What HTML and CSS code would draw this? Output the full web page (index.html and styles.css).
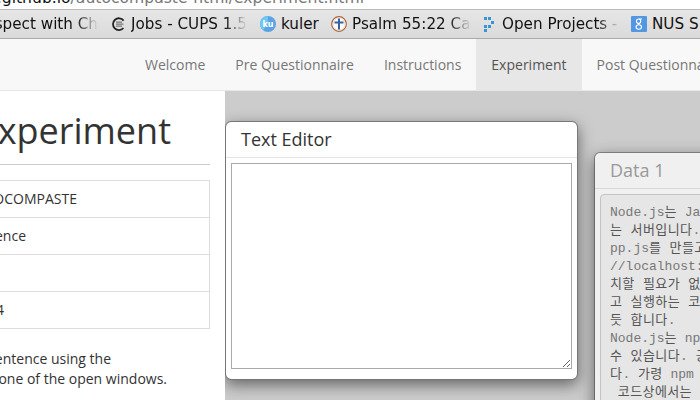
FILE: index.html
```
<!DOCTYPE html>
<html lang="en">
<head>
<meta charset="utf-8">
<title>Experiment</title>
<link rel="stylesheet" href="styles.css">
</head>
<body>
<header class="browser">
  <div class="address"><p class="url"><b>.github.io</b>/autocompaste-html/experiment.html</p></div>
  <div class="bookmarks">
    <span class="bookmark b-inspect"><span class="label fade">Inspect with Ch</span></span>
    <span class="bookmark b-jobs">
      <svg class="icon" viewBox="0 0 16 16"><path d="M12.6 4.6A5.9 5.9 0 1 0 12.4 12" fill="none" stroke="#222" stroke-width="1.8"/><path d="M5 6.2h6M5 8.2h7.5M5 10.2h6" stroke="#777" stroke-width="1.2"/></svg>
      <span class="label fade">Jobs - CUPS 1.5</span></span>
    <span class="bookmark b-kuler">
      <svg class="icon" viewBox="0 0 16 16"><circle cx="8" cy="8" r="8" fill="#5ba3e6"/><path d="M8 0a8 8 0 0 0-5 14.2L8 8z" fill="#70c6f2"/><text x="8" y="10.8" class="ku">ku</text></svg>
      <span class="label">kuler</span></span>
    <span class="bookmark b-psalm">
      <svg class="icon" viewBox="0 0 16 16"><circle cx="8" cy="8" r="7.3" fill="#fff" stroke="#a9643c" stroke-width="1.2"/><circle cx="8" cy="8" r="6" fill="none" stroke="#e5d3bf" stroke-width=".8"/><path d="M8 2.5v11M3.5 6.5h9" stroke="#3562a8" stroke-width="2"/></svg>
      <span class="label fade">Psalm 55:22 Ca</span></span>
    <span class="bookmark b-open">
      <svg class="icon" viewBox="0 0 16 16"><path d="M0 1h3v3H0zM4 1h3v3H4zM7 5h3v3H7zM4 9h3v3H4zM0 9h3v3H0zM0 13h3v3H0z" fill="#3b94d4"/></svg>
      <span class="label fade">Open Projects -</span></span>
    <span class="bookmark b-nus">
      <svg class="icon" viewBox="0 0 16 16"><rect width="16" height="16" rx="1" fill="#5396e2"/><g fill="none" stroke="#fff" stroke-width="1.1"><ellipse cx="7.6" cy="5.2" rx="2.1" ry="2.2"/><path d="M8 3h3M8.5 7.2l-1 1.3"/><ellipse cx="7.8" cy="11" rx="2.7" ry="2.2"/></g></svg>
      <span class="label">NUS S</span></span>
  </div>
</header>
<nav class="nav">
  <a>Welcome</a><a>Pre Questionnaire</a><a>Instructions</a><a class="active">Experiment</a><a>Post Questionnaire</a>
</nav>
<main class="main">
  <aside class="sidebar">
    <h1><span class="w-title">Experiment</span></h1>
    <div class="table">
      <div class="row"><span class="w-tech">AUTOCOMPASTE</span></div>
      <div class="row"><span class="w-gran">Sentence</span></div>
      <div class="row"></div>
      <div class="row"><span class="w-num">4</span></div>
    </div>
    <p class="hint"><span class="w-h1">sentence using the</span><span class="w-h2">one of the open windows.</span></p>
  </aside>
  <section class="desktop">
    <div class="window editor">
      <h4>Text Editor</h4>
      <div class="body"><textarea class="input"></textarea></div>
    </div>
    <div class="window data">
      <h4>Data 1</h4>
      <div class="body"><pre>Node.js<i>는</i> JavaScript
<i>는 서버입니다</i>. a
pp.js<i>를 만들고</i>
//localhost:3000
<i>치할 필요가 없이</i>
<i>고 실행하는 코드</i>
<i>듯 합니다</i>.
Node.js<i>는</i> npm<i>으로</i>
<i>수 있습니다</i>. <i>공식</i>
<i>다</i>. <i>가령</i> npm in
 <i>코드상에서는</i> var</pre></div>
    </div>
  </section>
</main>
</body>
</html>
```
FILE: styles.css
```
* { box-sizing: border-box; }
body {
  margin: 0;
  width: 700px;
  height: 400px;
  overflow: hidden;
  background: #fff;
  color: #333;
  font: 14px/20px "Open Sans", sans-serif;
  display: flex;
  flex-direction: column;
}
.browser {
  height: 39px;
  flex: none;
  color: #111;
  font: 15.2px/20px "DejaVu Sans", sans-serif;
}
.address { height: 9px; overflow: hidden; display: flex; align-items: flex-end; }
.url { margin: 0 0 1px; width: 364px; display: flex; justify-content: flex-end; white-space: nowrap; color: #777; font-size: 15.6px; }
.url b { font-weight: normal; color: #111; }
.bookmarks {
  height: 30px;
  display: flex;
  align-items: center;
  border-top: 1px solid #bbb;
  border-bottom: 1px solid #aaa;
  background: linear-gradient(#e6e6e6, #dadada);
  overflow: hidden;
}
.bookmark { display: flex; align-items: center; gap: 5px; flex: none; white-space: nowrap; }
.icon { width: 16px; height: 16px; flex: none; }
.label { overflow: hidden; }
.fade { -webkit-mask-image: linear-gradient(to left, transparent, #000 22px); mask-image: linear-gradient(to left, transparent, #000 22px); }
.b-inspect { width: 111px; }
.b-inspect .label { width: 98px; display: flex; justify-content: flex-end; }
.b-jobs { width: 149px; gap: 4px; }
.b-jobs .label { width: 116px; }
.b-kuler { width: 71px; }
.b-psalm { width: 153px; }
.b-psalm .label { width: 119px; }
.b-open { width: 147px; gap: 2px; }
.b-open .label { width: 118px; }
.ku { font: bold 8px "DejaVu Sans", sans-serif; fill: #fff; text-anchor: middle; }
.nav {
  height: 52px;
  flex: none;
  display: flex;
  padding-left: 130px;
  background: #f8f8f8;
  border-bottom: 1px solid #e7e7e7;
  overflow: hidden;
}
.nav a { padding: 16px 15px 15px; color: #777; flex: none; }
.nav .active { color: #555; background: #e7e7e7; }
.main { flex: 1; min-height: 0; display: flex; }
.sidebar { width: 225px; padding: 20px 15px 0 0; overflow: hidden; }
.sidebar span { display: flex; justify-content: flex-end; white-space: nowrap; }
h1 { margin: 0 0 15px; height: 54px; border-bottom: 1px solid #ccc; font-size: 36px; line-height: 40px; font-weight: 400; }
.w-title { width: 171px; }
.table { border: 1px solid #ddd; border-left: 0; border-bottom: 0; }
.row { height: 37px; padding-top: 8px; border-bottom: 1px solid #ddd; }
.w-tech { width: 77px; }
.w-gran { width: 26px; }
.w-num { width: 4px; }
.hint { margin: 20px 0 0; }
.w-h1 { width: 111px; }
.w-h2 { width: 167px; }
.desktop { flex: 1; position: relative; overflow: hidden; background: #ccc; }
.window {
  position: absolute;
  width: 353px;
  height: 259px;
  display: flex;
  flex-direction: column;
  background: #fff;
  background-clip: padding-box;
  border: 1px solid rgba(0, 0, 0, .3);
  border-radius: 6px;
  box-shadow: 0 5px 15px rgba(0, 0, 0, .5);
}
.editor { left: 0; top: 30px; border-color: #777; }
.data { left: 369px; top: 61px; height: 340px; background-color: #f0f0f0; }
.window h4 { margin: 0; padding: 7px 15px 8px; height: 36px; border-bottom: 1px solid #e5e5e5; font-size: 18px; line-height: 20px; font-weight: 400; }
.data h4 { color: #999; border-color: #d8d8d8; }
.body { flex: 1; padding: 5px; display: flex; }
.input { flex: 1; border: 1px solid #aaa; border-radius: 0; padding: 2px; margin-bottom: 5px; background: #fff; resize: both; outline: 0; }
pre {
  flex: 1;
  margin: 0;
  padding: 9px;
  overflow: hidden;
  background: #e6e6e6;
  border: 1px solid #c4c4c4;
  border-radius: 4px;
  color: #777;
  font: 13px/18px "Liberation Mono", "Noto Sans CJK KR", monospace;
}
pre i { font-style: normal; letter-spacing: .4px; color: #555; }
```
